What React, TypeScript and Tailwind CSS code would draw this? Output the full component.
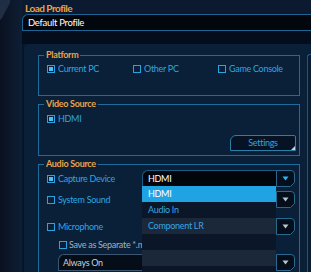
import React from "react";

function Box({ checked }: { checked?: boolean }) {
  return (
    <span className="w-[8px] h-[8px] border border-[#2aa4de] flex items-center justify-center shrink-0">
      {checked && <span className="w-[4px] h-[4px] bg-[#4cc0f2]" />}
    </span>
  );
}

function Check({ label, checked, w }: { label: string; checked?: boolean; w?: string }) {
  return (
    <div className={`flex items-center gap-[3px] h-[12px] ${w ?? ""}`}>
      <Box checked={checked} />
      <span className="text-[9px] leading-[12px] tracking-[-0.3px] text-[#2ea6e0] whitespace-nowrap">{label}</span>
    </div>
  );
}

function Arrow({ bright }: { bright?: boolean }) {
  return (
    <svg width="19" height="17" viewBox="0 0 19 17" className="shrink-0">
      <path d="M0.5 0.5 H15 Q18.5 0.5 18.5 4 V12.5 L14.5 16.5 H0.5 Z" fill="#050e1b" stroke="#2a6890" strokeWidth="1" />
      <polygon points="6.5,6.5 12.5,6.5 9.5,10.5" fill={bright ? "#2cb6f4" : "#b8c4d0"} />
    </svg>
  );
}

function Group({ title, className, children }: { title: string; className?: string; children?: React.ReactNode }) {
  return (
    <div className={`relative w-[262px] shrink-0 border border-[#1d6c9c] ${className ?? ""}`}>
      <span className="absolute -top-[7px] left-[5px] px-[2px] bg-[#0a1f38] text-[9px] leading-[11px] font-bold tracking-[-0.3px] text-[#eba447] whitespace-nowrap">
        {title}
      </span>
      {children}
    </div>
  );
}

function Dropdown({ text, bright, list }: { text?: string; bright?: boolean; list?: boolean }) {
  return (
    <div className="flex h-[17px] w-[153px] shrink-0">
      <div className="relative w-[134px] h-[17px] bg-[#02060c] border-l border-t border-b border-[#1d5c84] rounded-tl-[6px] flex items-center pl-[5px]">
        <span className="text-[9px] tracking-[-0.3px] text-white leading-[12px]">{text}</span>
        {list && (
          <div className="absolute top-full -left-[1px] w-[134px] flex flex-col z-10">
            <div className="h-[16px] bg-[#1fa3e3] flex items-center pl-[6px] text-[9px] tracking-[-0.3px] text-white">HDMI</div>
            <div className="h-[16px] bg-[#0b1628] flex items-center pl-[6px] text-[9px] tracking-[-0.3px] text-[#36a6e0]">Audio In</div>
            <div className="h-[16px] bg-[#1b283a] flex items-center pl-[6px] text-[9px] tracking-[-0.3px] text-[#36a6e0]">Component LR</div>
            <div className="h-[16px] bg-[#0b1628]" />
            <div className="h-[16px] bg-[#1b283a]" />
            <div className="h-[16px] bg-[#0b1628]" />
          </div>
        )}
      </div>
      <Arrow bright={bright} />
    </div>
  );
}

export default function App() {
  return (
    <div className="w-[311px] h-[272px] overflow-hidden flex bg-[#07152a] font-[Lato,sans-serif]">
      {/* left frame */}
      <div className="w-[22px] shrink-0 h-full bg-gradient-to-r from-[#0a1120] to-[#0e1e35] flex flex-col">
        <svg width="22" height="22" viewBox="0 0 22 22">
          <polygon points="0,0 10,0 10,3 2,18 0,20" fill="#1f2e45" />
        </svg>
      </div>
      <div className="flex-1 min-w-0 flex flex-col">
        <div className="h-[16px] bg-[#0b1a31] pl-[3px] pt-[3px] text-[10px] font-bold leading-[11px] tracking-[-0.5px] text-[#eba447] whitespace-nowrap">
          Load Profile
        </div>
        <div className="h-[17px] w-[320px] shrink-0 bg-[#02070e] border-l border-t border-b border-[#1d6590] rounded-tl-[6px] pl-[5px] flex items-center">
          <span className="text-white text-[9.5px] tracking-[-0.3px] leading-[12px]">Default Profile</span>
        </div>
        <div className="h-[13px] shrink-0 bg-[#040d1b]" />
        <div className="flex-1 ml-[2px] bg-[#0a1f38] flex rounded-tl-[4px]">
          <div className="w-[276px] shrink-0 pl-[14px] pt-[11px] flex flex-col gap-[8px]">
            <Group title="Platform" className="h-[41px] pt-[7px] pl-[8px]">
              <div className="flex">
                <Check label="Current PC" checked w="w-[86px]" />
                <Check label="Other PC" w="w-[85px]" />
                <Check label="Game Console" />
              </div>
            </Group>
            <Group title="Video Source" className="h-[52px] pt-[8px] pl-[8px] pr-[3px] flex flex-col">
              <Check label="HDMI" checked />
              <div className="mt-[10px] self-end relative w-[66px] h-[16px] border border-[#2a7ea8] rounded-tl-[6px] rounded-tr-[2px] bg-[#051324] flex items-center justify-center">
                <span className="text-[9px] tracking-[-0.3px] text-[#2ea6e0] leading-[12px]">Settings</span>
                <svg width="4" height="4" viewBox="0 0 4 4" className="absolute right-[0px] bottom-[0px]">
                  <polygon points="4,0 4,4 0,4" fill="#c8d4e0" />
                </svg>
              </div>
            </Group>
            <Group title="Audio Source" className="h-[140px] pt-[5px] pl-[8px] flex flex-col">
              <div className="flex h-[17px] items-center">
                <div className="w-[95px] shrink-0"><Check label="Capture Device" checked /></div>
                <Dropdown text="HDMI" bright list />
              </div>
              <div className="flex h-[17px] items-center mt-[4px]">
                <div className="w-[95px] shrink-0"><Check label="System Sound" /></div>
                <Dropdown />
              </div>
              <div className="flex h-[17px] items-center mt-[10px]">
                <div className="w-[95px] shrink-0"><Check label="Microphone" /></div>
                <Dropdown />
              </div>
              <div className="flex h-[11px] items-center mt-[4px] pl-[12px] gap-[2px]">
                <Box />
                <span className="text-[9px] tracking-[-0.3px] text-[#9fb2c2] leading-[11px] whitespace-nowrap">Save as Separate *.mp3</span>
              </div>
              <div className="flex h-[17px] mt-[4px] pl-[11px]">
                <div className="w-[218px] h-[17px] bg-[#050d19] border-l border-t border-b border-[#3c5670] rounded-tl-[6px] flex items-center pl-[4px]">
                  <span className="text-[9px] tracking-[-0.3px] text-[#c8d2dc] leading-[12px]">Always On</span>
                </div>
                <Arrow />
              </div>
            </Group>
          </div>
          <div className="ml-auto mt-[10px] w-[4px] border-l border-t border-[#1a5a80] rounded-tl-[3px] bg-[#0a1c33]" />
        </div>
      </div>
    </div>
  );
}
